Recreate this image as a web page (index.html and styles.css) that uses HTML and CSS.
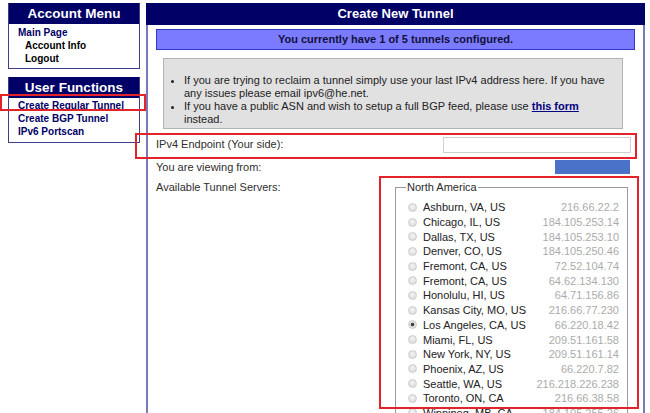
FILE: index.html
```html
<!DOCTYPE html>
<html>
<head>
<meta charset="utf-8">
<link rel="stylesheet" href="styles.css">
</head>
<body>
<div class="page">
  <aside class="sidebar">
    <div class="box">
      <div class="box-head">Account Menu</div>
      <div class="box-links">
        <a class="lnk" href="#">Main Page</a>
        <a class="lnk sub" href="#">Account Info</a>
        <a class="lnk sub" href="#">Logout</a>
      </div>
    </div>
    <div class="box box2">
      <div class="box-head">User Functions</div>
      <div class="box-links tight">
        <a class="lnk" href="#">Create Regular Tunnel</a>
        <a class="lnk" href="#">Create BGP Tunnel</a>
        <a class="lnk" href="#">IPv6 Portscan</a>
      </div>
    </div>
  </aside>
  <main class="main">
    <div class="main-head">Create New Tunnel</div>
    <div class="main-body">
      <div class="banner">You currently have 1 of 5 tunnels configured.</div>
      <div class="notice">
        <ul>
          <li>If you are trying to reclaim a tunnel simply use your last IPv4 address here. If you have any issues please email ipv6@he.net.</li>
          <li>If you have a public ASN and wish to setup a full BGP feed, please use <a class="form-link" href="#">this form</a> instead.</li>
        </ul>
      </div>
      <div class="form-grid">
        <div class="lbl row1">IPv4 Endpoint (Your side):</div>
        <div class="val row1"><input class="ip-input" type="text"></div>
        <div class="lbl row2">You are viewing from:</div>
        <div class="val row2"><span class="viewing"></span></div>
        <div class="lbl row3">Available Tunnel Servers:</div>
        <div class="val row3">
          <fieldset class="servers">
            <legend>North America</legend>
            <label class="srv"><input type="radio" name="s"><span class="city">Ashburn, VA, US</span><span class="addr">216.66.22.2</span></label>
            <label class="srv"><input type="radio" name="s"><span class="city">Chicago, IL, US</span><span class="addr">184.105.253.14</span></label>
            <label class="srv"><input type="radio" name="s"><span class="city">Dallas, TX, US</span><span class="addr">184.105.253.10</span></label>
            <label class="srv"><input type="radio" name="s"><span class="city">Denver, CO, US</span><span class="addr">184.105.250.46</span></label>
            <label class="srv"><input type="radio" name="s"><span class="city">Fremont, CA, US</span><span class="addr">72.52.104.74</span></label>
            <label class="srv"><input type="radio" name="s"><span class="city">Fremont, CA, US</span><span class="addr">64.62.134.130</span></label>
            <label class="srv"><input type="radio" name="s"><span class="city">Honolulu, HI, US</span><span class="addr">64.71.156.86</span></label>
            <label class="srv"><input type="radio" name="s"><span class="city">Kansas City, MO, US</span><span class="addr">216.66.77.230</span></label>
            <label class="srv"><input type="radio" name="s" checked><span class="city">Los Angeles, CA, US</span><span class="addr">66.220.18.42</span></label>
            <label class="srv"><input type="radio" name="s"><span class="city">Miami, FL, US</span><span class="addr">209.51.161.58</span></label>
            <label class="srv"><input type="radio" name="s"><span class="city">New York, NY, US</span><span class="addr">209.51.161.14</span></label>
            <label class="srv"><input type="radio" name="s"><span class="city">Phoenix, AZ, US</span><span class="addr">66.220.7.82</span></label>
            <label class="srv"><input type="radio" name="s"><span class="city">Seattle, WA, US</span><span class="addr">216.218.226.238</span></label>
            <label class="srv"><input type="radio" name="s"><span class="city">Toronto, ON, CA</span><span class="addr">216.66.38.58</span></label>
            <label class="srv"><input type="radio" name="s"><span class="city">Winnipeg, MB, CA</span><span class="addr">184.105.255.26</span></label>
          </fieldset>
        </div>
      </div>
    </div>
  </main>
</div>
<div class="mark mark1"></div>
<div class="mark mark2"></div>
<div class="mark mark3"></div>
</body>
</html>
```

FILE: styles.css
```css
html, body {
  margin: 0;
  padding: 0;
  background: #ffffff;
}
body {
  position: relative;
  height: 413px;
  overflow: hidden;
  font-family: "Liberation Sans", Arial, sans-serif;
  font-size: 11px;
  color: #2a2a2a;
}
.page {
  display: flex;
  align-items: flex-start;
  gap: 6px;
  padding: 3px 5px 0 8px;
}
.sidebar {
  width: 132px;
  flex: none;
  display: flex;
  flex-direction: column;
  gap: 8px;
}
.box {
  border: 1px solid #3d3d8a;
  border-top: none;
  background: #fff;
}
.box-head {
  background: #000066;
  color: #fff;
  font-weight: bold;
  font-size: 13.5px;
  height: 21px;
  line-height: 21px;
  text-align: center;
}
.box-links {
  display: flex;
  flex-direction: column;
  padding: 3px 0 3px 9px;
}
.box-links.tight {
  padding-top: 2px;
  padding-bottom: 3px;
}
.lnk {
  font-size: 10px;
  font-weight: bold;
  line-height: 12.8px;
  color: #000066;
  text-decoration: none;
}
.lnk.sub {
  color: #000000;
  padding-left: 7px;
}
.main {
  flex: 1;
  min-height: 420px;
  border-left: 2px solid #7a78b6;
  border-right: 2px solid #7a78b6;
}
.main-head {
  background: #000066;
  color: #fff;
  font-weight: bold;
  font-size: 13px;
  height: 22px;
  line-height: 22px;
  text-align: center;
  margin-left: -2px;
  margin-right: -2px;
}
.main-body {
  padding: 4px 8px 0 8px;
}
.banner {
  background: #7b7bff;
  border: 1px solid #3535c4;
  height: 19px;
  line-height: 19px;
  text-align: center;
  font-weight: bold;
  font-size: 11px;
  color: #10103a;
}
.notice {
  margin: 8px 0 0 7px;
  width: 450px;
  background: #e1e1e1;
  border: 1px solid #b3b3b3;
  padding: 15px 8px 2px 0;
}
.notice ul {
  margin: 0;
  padding-left: 20px;
  line-height: 13px;
  color: #222;
}
.form-link {
  color: #000080;
  font-weight: bold;
  text-decoration: underline;
}
.form-grid {
  display: grid;
  grid-template-columns: 239px 1fr;
  margin-top: 3px;
}
.lbl {
  display: flex;
  align-items: center;
  color: #2f2f2f;
}
.val {
  display: flex;
  align-items: center;
  justify-content: flex-end;
}
.row1 {
  height: 23px;
}
.row2 {
  height: 24px;
}
.row3.lbl {
  align-items: flex-start;
  padding-top: 2px;
  height: 14px;
}
.row3.val {
  align-items: flex-start;
  justify-content: flex-start;
  padding-top: 2px;
}
.ip-input {
  width: 188px;
  height: 16px;
  box-sizing: border-box;
  border: 1px solid #cfcfcf;
  margin: 2px 4px 0 0;
  padding: 0;
  background: #fff;
}
.viewing {
  display: block;
  width: 75px;
  height: 14px;
  margin-right: 5px;
  background: #4a72c8;
}
.servers {
  width: 233px;
  box-sizing: border-box;
  margin: 0;
  border: 1px solid #9a9a9a;
  padding: 7px 8px 0 12px;
}
.servers legend {
  padding: 0 1px;
  margin-left: -2px;
  font-size: 11px;
  color: #2a2a2a;
}
.srv {
  display: flex;
  align-items: center;
  height: 14.7px;
  font-size: 11px;
  color: #222;
}
.srv input {
  -webkit-appearance: none;
  appearance: none;
  width: 9px;
  height: 9px;
  margin: 0 6px 0 0;
  border-radius: 50%;
  border: 1px solid #cdcdcd;
  background: radial-gradient(circle at 50% 40%, #f4f4f4, #d6d6d6);
  box-sizing: border-box;
  flex: none;
}
.srv input:checked {
  background: radial-gradient(circle, #444 0 1.6px, #e8e8e8 2.2px, #d0d0d0);
}
.city {
  flex: 1;
}
.addr {
  color: #ababab;
  font-size: 11px;
}
.mark {
  position: absolute;
  border: 2px solid #e3232a;
  box-sizing: border-box;
  pointer-events: none;
}
.mark1 {
  left: 0;
  top: 94px;
  width: 146px;
  height: 17px;
}
.mark2 {
  left: 135px;
  top: 133px;
  width: 502px;
  height: 26px;
}
.mark3 {
  left: 379px;
  top: 176px;
  width: 260px;
  height: 233px;
}
```
